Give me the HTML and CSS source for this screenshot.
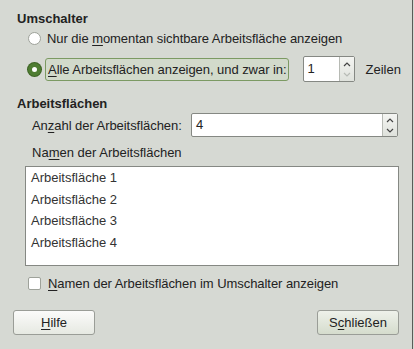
FILE: index.html
```html
<!DOCTYPE html>
<html lang="de">
  <head>
    <meta charset="UTF-8">
    <meta name="viewport" content="width=device-width, initial-scale=1">
    <title>Arbeitsflächenumschalter – Einstellungen</title>
    <link rel="stylesheet" href="styles.css">
  </head>
  <body>

    <div class="dialog">

      <div class="section-title title-switcher">Umschalter</div>

      <label class="radio-row row-current">
        <span class="radio"></span>
        <span class="radio-text">Nur die <u>m</u>omentan sichtbare Arbeitsfläche anzeigen</span>
      </label>

      <div class="radio-row row-all">
        <span class="radio radio-on"></span>
        <span class="radio-text focus-box"><u>A</u>lle Arbeitsflächen anzeigen, und zwar in:</span>
        <span class="spin spin-rows">
          <span class="spin-entry">1</span>
          <span class="spin-btns">
            <svg width="14" height="24" viewBox="0 0 14 24">
              <path d="M4 9 L7 6 L10 9" fill="none" stroke="#444" stroke-width="1.2"/>
              <path d="M4 16 L7 19 L10 16" fill="none" stroke="#b8bcb6" stroke-width="1.2"/>
            </svg>
          </span>
        </span>
        <span class="spin-suffix">Zeilen</span>
      </div>

      <div class="section-title title-workspaces">Arbeitsflächen</div>

      <div class="count-row">
        <span class="count-label">An<u>z</u>ahl der Arbeitsflächen:</span>
        <span class="spin spin-count">
          <span class="spin-entry">4</span>
          <span class="spin-btns">
            <svg width="14" height="23" viewBox="0 0 14 23">
              <path d="M4 8 L7 5 L10 8" fill="none" stroke="#444" stroke-width="1.2"/>
              <path d="M4 15 L7 18 L10 15" fill="none" stroke="#444" stroke-width="1.2"/>
            </svg>
          </span>
        </span>
      </div>

      <div class="names-label">Na<u>m</u>en der Arbeitsflächen</div>

      <div class="names-list">
        <div class="names-item">Arbeitsfläche 1</div>
        <div class="names-item">Arbeitsfläche 2</div>
        <div class="names-item">Arbeitsfläche 3</div>
        <div class="names-item">Arbeitsfläche 4</div>
      </div>

      <label class="check-row">
        <span class="check"></span>
        <span class="check-text"><u>N</u>amen der Arbeitsflächen im Umschalter anzeigen</span>
      </label>

      <div class="button-row">
        <button class="btn"><u>H</u>ilfe</button>
        <button class="btn">S<u>c</u>hließen</button>
      </div>

    </div>

  </body>
</html>
```

FILE: styles.css
```css
html, body { margin: 0; padding: 0 }
body { background: #d6d9d3; font-family: "Liberation Sans", Arial, sans-serif; font-size: 13px; color: #222 }

.dialog {
  width: 413px;
  height: 349px;
  box-sizing: border-box;
  border-right: 1px solid #5a5c58;
  display: flex;
  flex-direction: column;
  padding-top: 11px;
}

u { text-decoration: underline; text-underline-offset: 2px }

/* section titles */

.section-title { font-weight: bold; margin-left: 17px; height: 16px; line-height: 16px }
.title-workspaces { margin-top: 13px; height: 18px; line-height: 18px }

/* radio rows */

.radio-row { display: flex; align-items: center; margin-left: 28px }
.row-current { height: 18px; margin-top: 2px }
.row-all { height: 26px; margin-top: 9px }

.radio {
  width: 11px; height: 11px;
  border: 1px solid #9ea29a;
  border-radius: 50%;
  background: #fff;
  flex: none;
}
.radio-on {
  width: 5px; height: 5px;
  border: 4px solid #4f7d32;
  background: #fff;
  box-shadow: 0 0 0 1px #3d6424;
}
.radio-text { margin-left: 6px; white-space: nowrap; letter-spacing: -0.05px }
.focus-box {
  margin-left: 4px;
  padding: 0 1px 0 2px;
  height: 21px;
  line-height: 21px;
  border: 1px solid #7c9a63;
  border-radius: 3px;
  background: #d2dacb;
}

/* spin buttons */

.spin { display: flex; border: 1px solid #858883; border-radius: 2px; background: #fff; box-sizing: border-box }
.spin-entry { flex: 1; padding-left: 4px }
.spin-btns { flex: none; width: 14px; background: linear-gradient(#f4f5f2, #dfe2dc); border-left: 1px solid #b7bab4 }
.spin-btns svg { display: block }

.spin-rows { margin-left: 14px; width: 52px; height: 26px; line-height: 24px }
.spin-suffix { margin-left: 11px }

/* count row */

.count-row { display: flex; align-items: center; margin-left: 32px; height: 24px; margin-top: 0 }
.count-label { width: 159px; letter-spacing: -0.05px }
.spin-count { width: 207px; height: 24px; line-height: 22px }

/* names list */

.names-label { margin-left: 32px; margin-top: 8px; height: 16px; line-height: 16px }

.names-list {
  margin: 5px 0 0 25px;
  width: 374px;
  height: 100px;
  box-sizing: border-box;
  border: 1px solid #858883;
  background: #fff;
  padding-top: 0;
}
.names-item { padding-left: 5px; height: 21.7px; line-height: 21px; color: #333 }

/* checkbox */

.check-row { display: flex; align-items: center; margin: 8px 0 0 28px; height: 18px }
.check {
  width: 11px; height: 11px;
  border: 1px solid #9ea29a;
  border-radius: 2px;
  background: #fff;
}
.check-text { margin-left: 7px; letter-spacing: -0.05px }

/* buttons */

.button-row { display: flex; justify-content: space-between; margin: 18px 0 0 13px; width: 386px }
.btn {
  width: 82px; height: 25px;
  font: inherit;
  color: #222;
  border: 1px solid #9a9d97;
  border-radius: 3px;
  background: linear-gradient(#fbfbfa, #e6e9e2);
  padding: 0;
}
.btn + .btn { background: linear-gradient(#eef1ea, #d5dccd) }
```
